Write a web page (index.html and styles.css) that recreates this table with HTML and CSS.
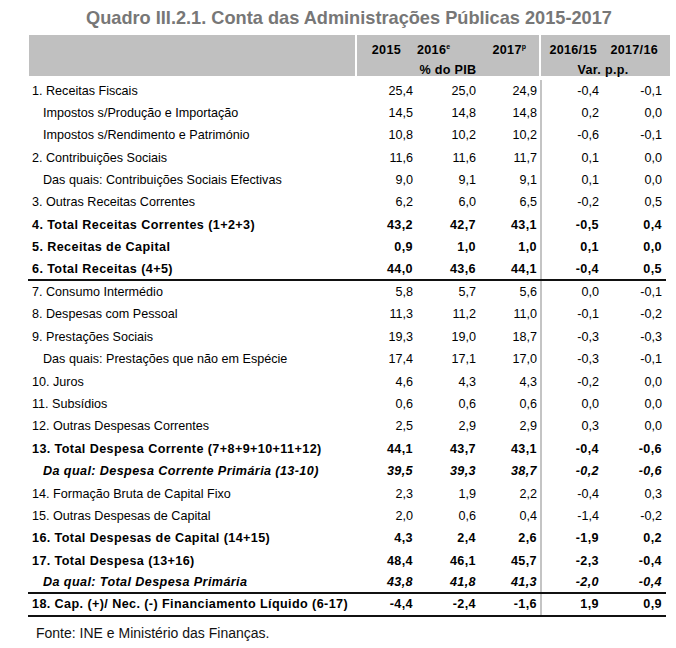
FILE: index.html
```html
<!DOCTYPE html>
<html lang="pt">
<head>
<meta charset="utf-8">
<title>Quadro III.2.1</title>
<link rel="stylesheet" href="styles.css">
</head>
<body>
<div class="page">
  <h1 class="title">Quadro III.2.1. Conta das Administrações Públicas 2015-2017</h1>
  <div class="head">
    <div class="h-label"></div>
    <div class="h-group h-pib">
      <div class="h-years">
        <span class="hy1">2015</span>
        <span class="hy2">2016<sup>e</sup></span>
        <span class="hy3">2017<sup>p</sup></span>
      </div>
      <div class="h-unit">% do PIB</div>
    </div>
    <div class="h-group h-var">
      <div class="h-years">
        <span class="hy4">2016/15</span>
        <span class="hy5">2017/16</span>
      </div>
      <div class="h-unit h-unit-var">Var. p.p.</div>
    </div>
  </div>
  <div class="tbody">
    <div class="row"><span class="label">1. Receitas Fiscais</span><span>25,4</span><span>25,0</span><span>24,9</span><span>-0,4</span><span>-0,1</span></div>
    <div class="row sub"><span class="label">Impostos s/Produção e Importação</span><span>14,5</span><span>14,8</span><span>14,8</span><span>0,2</span><span>0,0</span></div>
    <div class="row sub"><span class="label">Impostos s/Rendimento e Património</span><span>10,8</span><span>10,2</span><span>10,2</span><span>-0,6</span><span>-0,1</span></div>
    <div class="row"><span class="label">2. Contribuições Sociais</span><span>11,6</span><span>11,6</span><span>11,7</span><span>0,1</span><span>0,0</span></div>
    <div class="row sub"><span class="label">Das quais: Contribuições Sociais Efectivas</span><span>9,0</span><span>9,1</span><span>9,1</span><span>0,1</span><span>0,0</span></div>
    <div class="row"><span class="label">3. Outras Receitas Correntes</span><span>6,2</span><span>6,0</span><span>6,5</span><span>-0,2</span><span>0,5</span></div>
    <div class="row bold"><span class="label">4. Total Receitas Correntes (1+2+3)</span><span>43,2</span><span>42,7</span><span>43,1</span><span>-0,5</span><span>0,4</span></div>
    <div class="row bold"><span class="label">5. Receitas de Capital</span><span>0,9</span><span>1,0</span><span>1,0</span><span>0,1</span><span>0,0</span></div>
    <div class="row bold ruled"><span class="label">6. Total Receitas (4+5)</span><span>44,0</span><span>43,6</span><span>44,1</span><span>-0,4</span><span>0,5</span></div>
    <div class="row"><span class="label">7. Consumo Intermédio</span><span>5,8</span><span>5,7</span><span>5,6</span><span>0,0</span><span>-0,1</span></div>
    <div class="row"><span class="label">8. Despesas com Pessoal</span><span>11,3</span><span>11,2</span><span>11,0</span><span>-0,1</span><span>-0,2</span></div>
    <div class="row"><span class="label">9. Prestações Sociais</span><span>19,3</span><span>19,0</span><span>18,7</span><span>-0,3</span><span>-0,3</span></div>
    <div class="row sub"><span class="label">Das quais: Prestações que não em Espécie</span><span>17,4</span><span>17,1</span><span>17,0</span><span>-0,3</span><span>-0,1</span></div>
    <div class="row"><span class="label">10. Juros</span><span>4,6</span><span>4,3</span><span>4,3</span><span>-0,2</span><span>0,0</span></div>
    <div class="row"><span class="label">11. Subsídios</span><span>0,6</span><span>0,6</span><span>0,6</span><span>0,0</span><span>0,0</span></div>
    <div class="row"><span class="label">12. Outras Despesas Correntes</span><span>2,5</span><span>2,9</span><span>2,9</span><span>0,3</span><span>0,0</span></div>
    <div class="row bold"><span class="label">13. Total Despesa Corrente (7+8+9+10+11+12)</span><span>44,1</span><span>43,7</span><span>43,1</span><span>-0,4</span><span>-0,6</span></div>
    <div class="row bold italic sub"><span class="label">Da qual: Despesa Corrente Primária (13-10)</span><span>39,5</span><span>39,3</span><span>38,7</span><span>-0,2</span><span>-0,6</span></div>
    <div class="row"><span class="label">14. Formação Bruta de Capital Fixo</span><span>2,3</span><span>1,9</span><span>2,2</span><span>-0,4</span><span>0,3</span></div>
    <div class="row"><span class="label">15. Outras Despesas de Capital</span><span>2,0</span><span>0,6</span><span>0,4</span><span>-1,4</span><span>-0,2</span></div>
    <div class="row bold"><span class="label">16. Total Despesas de Capital (14+15)</span><span>4,3</span><span>2,4</span><span>2,6</span><span>-1,9</span><span>0,2</span></div>
    <div class="row bold"><span class="label">17. Total Despesa (13+16)</span><span>48,4</span><span>46,1</span><span>45,7</span><span>-2,3</span><span>-0,4</span></div>
    <div class="row bold italic sub ruled"><span class="label">Da qual: Total Despesa Primária</span><span>43,8</span><span>41,8</span><span>41,3</span><span>-2,0</span><span>-0,4</span></div>
    <div class="row bold ruled"><span class="label">18. Cap. (+)/ Nec. (-) Financiamento Líquido (6-17)</span><span>-4,4</span><span>-2,4</span><span>-1,6</span><span>1,9</span><span>0,9</span></div>
  </div>
  <p class="source">Fonte: INE e Ministério das Finanças.</p>
</div>
</body>
</html>
```

FILE: styles.css
```css
html, body {
  margin: 0;
  padding: 0;
  background: #ffffff;
}

.page {
  width: 642px;
  padding: 7px 0 0 28px;
  font-family: "Liberation Sans", Arial, sans-serif;
  color: #000;
}

.title {
  margin: 0 0 6px 0;
  height: 22px;
  line-height: 22px;
  text-align: center;
  font-family: "Liberation Sans", Arial, sans-serif;
  font-size: 18.2px;
  font-weight: bold;
  color: #777777;
  white-space: nowrap;
}

/* header */
.head {
  display: flex;
  gap: 2px;
  height: 41px;
  margin-left: 1px;
  font-size: 12.6px;
  font-weight: bold;
  letter-spacing: 0.3px;
}

.h-label {
  width: 326px;
  background: #c0c0c0;
}

.h-group {
  background: #c0c0c0;
}

.h-pib { width: 182px; }
.h-var { width: 129px; }

.h-years {
  display: grid;
  margin-top: 5px;
  height: 20px;
  line-height: 20px;
  white-space: nowrap;
}

.h-pib .h-years { grid-template-columns: 60px 63px 59px; }
.h-var .h-years { grid-template-columns: 63px 66px; }

.h-years span { text-align: right; }
.hy1 { padding-right: 16px; }
.hy2 { padding-right: 33px; }
.hy3 { padding-right: 13px; }
.hy4 { padding-right: 7px; }
.hy5 { padding-right: 12px; }

.h-years sup {
  font-size: 7px;
  line-height: 0;
  vertical-align: 5px;
  letter-spacing: 0;
}

.h-unit {
  line-height: 16px;
  padding-top: 2px;
  text-align: center;
  white-space: nowrap;
}

.h-unit-var { padding-right: 5px; }

/* body */
.tbody {
  width: 638px;
  margin-top: 3.5px;
  background: linear-gradient(#c4c4c4, #c4c4c4) no-repeat 512px 0 / 2px 100%;
  font-size: 12.6px;
}

.row {
  display: grid;
  grid-template-columns: 328px 61px 63px 60px 64px 62px;
  box-sizing: border-box;
  height: 22.4px;
  line-height: 22.4px;
  white-space: nowrap;
}

.row span { text-align: right; }
.row span:nth-child(2) { padding-right: 4px; }
.row span:nth-child(3) { padding-right: 4px; }
.row span:nth-child(4) { padding-right: 3px; }
.row span:nth-child(5) { padding-right: 5px; }
.row span:nth-child(6) { padding-right: 4px; }

.row .label {
  text-align: left;
  padding-left: 4px;
}

.row.sub .label { padding-left: 15px; }

.row.bold {
  font-weight: bold;
  letter-spacing: 0.4px;
}

.row.italic { font-style: italic; }

.row.ruled {
  border-bottom: 2px solid #111;
  line-height: 20.4px;
}

.source {
  margin: 8px 0 0 8px;
  font-size: 14px;
  line-height: 17px;
  color: #111;
}
```
